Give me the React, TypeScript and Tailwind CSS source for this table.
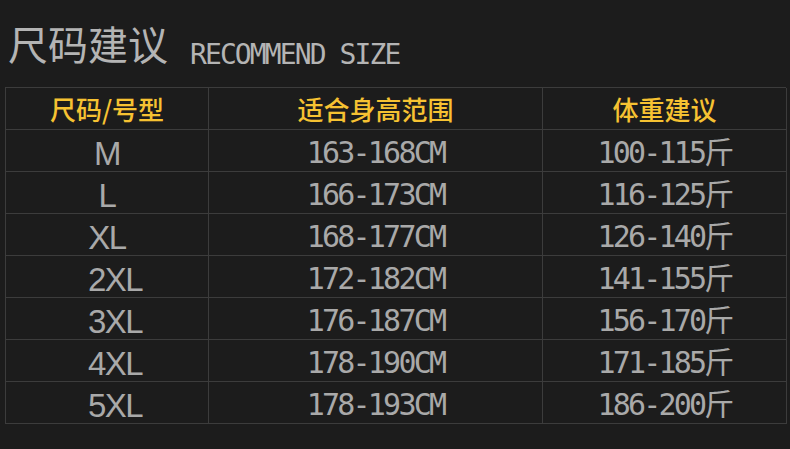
import React from "react";

const rows: [string, string, string][] = [
  ["M", "163-168CM", "100-115斤"],
  ["L", "166-173CM", "116-125斤"],
  ["XL", "168-177CM", "126-140斤"],
  ["2XL", "172-182CM", "141-155斤"],
  ["3XL", "176-187CM", "156-170斤"],
  ["4XL", "178-190CM", "171-185斤"],
  ["5XL", "178-193CM", "186-200斤"],
];

export default function App() {
  return (
    <div className="w-[790px] h-[449px] bg-[#1c1c1c] pl-[5px] overflow-hidden">
      <div className="h-[87px] flex items-baseline gap-[22px] pt-[19px] pl-[3px]">
        <span className="text-[40px] leading-[48px] text-[#b4b4b4] font-['Noto_Sans_CJK_SC',sans-serif]">
          尺码建议
        </span>
        <span className="relative top-[4px] text-[28px] leading-[48px] text-[#b4b4b4] tracking-[-1.9px] font-['DejaVu_Sans_Mono','Noto_Sans_CJK_SC',monospace]">
          RECOMMEND SIZE
        </span>
      </div>
      <div className="grid grid-cols-[203px_334px_244px] w-[781px] border-l border-t border-[#3c3c3c]">
        {["尺码/号型", "适合身高范围", "体重建议"].map((h) => (
          <div
            key={h}
            className="h-[42px] flex items-center justify-center border-r border-b border-[#3c3c3c] text-[26px] font-medium text-[#f6c232] font-['Noto_Sans_CJK_SC',sans-serif]"
          >
            {h}
          </div>
        ))}
        {rows.map((r) => (
          <React.Fragment key={r[0]}>
            <div
              className={
                "h-[42px] flex items-center justify-center pt-[6px] border-r border-b border-[#3c3c3c] text-[33px] text-[#a9a9a9] tracking-[-1.5px] font-['Liberation_Sans',sans-serif] " +
                (r[0].length === 3 ? "pl-[16px]" : "")
              }
            >
              {r[0]}
            </div>
            <div className="h-[42px] flex items-center justify-center pt-[4px] border-r border-b border-[#3c3c3c] text-[30px] text-[#a9a9a9] tracking-[-2.8px] font-['DejaVu_Sans_Mono','Noto_Sans_CJK_SC',monospace]">
              {r[1]}
            </div>
            <div className="h-[42px] flex items-center justify-center pt-[4px] border-r border-b border-[#3c3c3c] text-[30px] text-[#a9a9a9] tracking-[-2.8px] font-['DejaVu_Sans_Mono','Noto_Sans_CJK_SC',monospace]">
              {r[2]}
            </div>
          </React.Fragment>
        ))}
      </div>
    </div>
  );
}
